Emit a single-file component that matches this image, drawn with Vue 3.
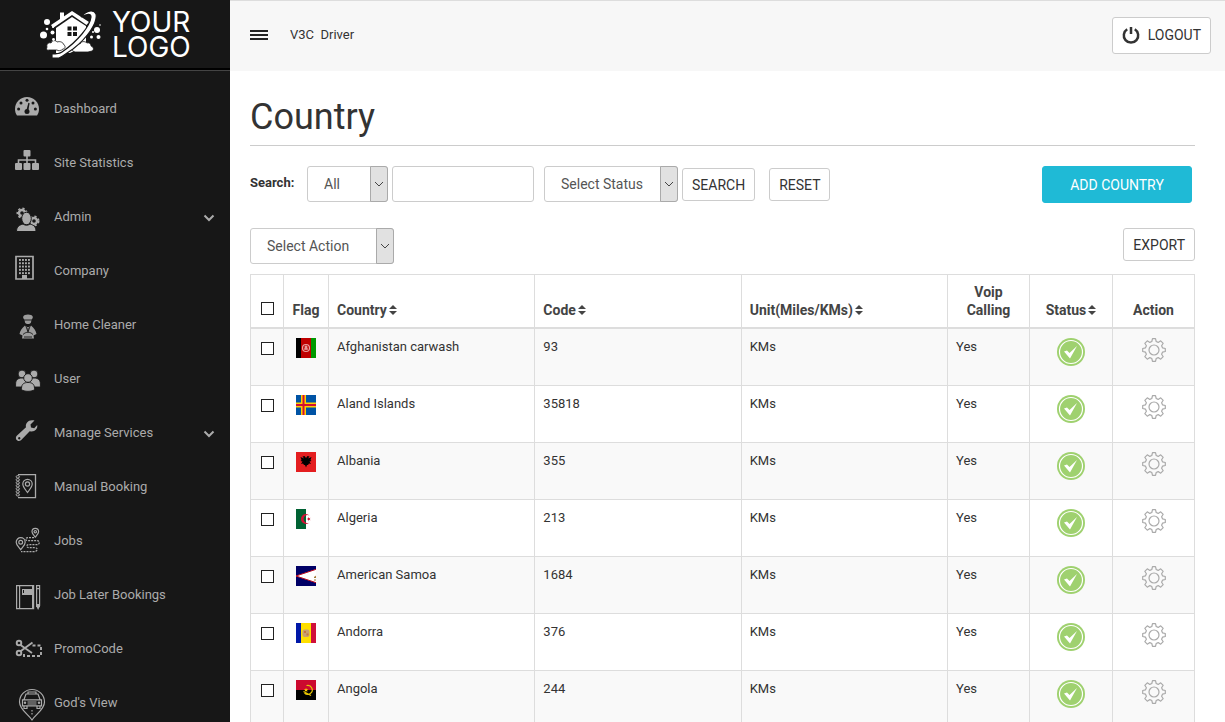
<script setup>
import { ref } from 'vue'

const gear = (cx, cy, r) =>
  `<circle cx="${cx}" cy="${cy}" r="${r}" fill="none" stroke="currentColor" stroke-width="2.4"/><circle cx="${cx}" cy="${cy}" r="${r + 1.7}" fill="none" stroke="currentColor" stroke-width="1.6" stroke-dasharray="2.2 2.2"/>`

const windows = [4, 7, 10, 13]
  .flatMap((x) => [4, 7.3, 10.6, 13.9, 17.2].map((y) => `<rect x="${x}" y="${y}" width="1.9" height="1.9" fill="currentColor"/>`))
  .join('')

const spiral = [5, 8, 11, 14, 17, 20, 23]
  .map((y) => `<ellipse cx="2.8" cy="${y + 0.8}" rx="1.7" ry="1.2" fill="none" stroke="currentColor"/>`)
  .join('')

const menu = [
  {
    label: 'Dashboard',
    icon: `<path fill="currentColor" d="M2 22.5C.6 20.500 0 18.400 0 16 0 9.400 5.400 4 12 4s12 5.400 12 12c0 2.400-.6 4.500-2 6.500z"/><g fill="#171717"><circle cx="3.600" cy="16" r="1.500"/><circle cx="6" cy="10" r="1.500"/><circle cx="12" cy="7.300" r="1.500"/><circle cx="18" cy="10" r="1.500"/><circle cx="20.400" cy="16" r="1.500"/><circle cx="12" cy="18.500" r="2.500"/><path d="M13.400 9.800l1.200.4-1.400 8.400-2-.6z"/></g>`
  },
  {
    label: 'Site Statistics',
    icon: `<g fill="currentColor"><rect x="8.500" y="3" width="7" height="6.500" rx="1"/><rect x="0" y="16" width="7" height="7" rx="1"/><rect x="8.500" y="16" width="7" height="7" rx="1"/><rect x="17" y="16" width="7" height="7" rx="1"/></g><path d="M12 9v8M3.500 17v-4h17v4" fill="none" stroke="currentColor" stroke-width="1.600"/>`
  },
  {
    label: 'Admin',
    open: true,
    icon: `${gear(7, 12, 3)}${gear(19, 20, 3)}<g fill="currentColor" stroke="#171717"><ellipse cx="11.500" cy="17.500" rx="4.800" ry="6.300"/><path d="M1.500 30.500c0-5 3-6.500 6.500-7.500 2 1.600 5 1.600 7 0 3.500 1 6 2.500 6 7.500z"/></g>`
  },
  {
    label: 'Company',
    icon: `<path d="M1 1.500h17v22.500h-17z" fill="none" stroke="currentColor" stroke-width="1.700"/>${windows}<rect x="7" y="20" width="5" height="4" fill="currentColor"/>`
  },
  {
    label: 'Home Cleaner',
    icon: `<g fill="currentColor" opacity=".9"><path d="M9.500 10.500C7 8.500 8 5.500 13 5.500s6 3 3.500 5l-.5 3c-1.300 2-4.700 2-6 0z"/><path d="M10 16.500l3 2 3-2C19 19 21 22 21.500 25l-3 1.500.5 3H7l.5-3-3-1.500c.5-3 2.500-6 5.500-8.500z"/></g><path d="M9.500 11h7M10.500 16l2.500 7 2.500-7M8 25.500c3-3 7-3 10 0M9 28h8M13 19v3" fill="none" stroke="#171717" stroke-width=".9"/>`
  },
  {
    label: 'User',
    icon: `<g fill="currentColor" stroke="#171717" stroke-width=".9"><circle cx="7" cy="11" r="3.900"/><circle cx="19" cy="11" r="3.900"/><path d="M.6 24v-3c0-4 2.400-6 6.400-6s6 2 6 6v3zM13 24v-3c0-4 2-6 6-6s6.400 2 6.400 6v3z"/><circle cx="13" cy="15" r="4.300"/><path d="M6.500 26.500v-1c0-4.500 2.500-6 6.500-6s6.500 1.500 6.500 6v1c-2 2.400-11 2.400-13 0z"/></g>`
  },
  {
    label: 'Manage Services',
    open: true,
    icon: `<path fill="currentColor" fill-rule="evenodd" d="M19.500 3.600l-4 3.800.5 3.200 3.200.6 3-3.200c.7 3.600-2 6.700-6 6.500l-1.500-.3L6 23.300c-2.800 2.400-6.600-1-4.500-4.200L11 10.300C10 6 14 2 19.500 3.600zM4.200 20a1.200 1.200 0 1 0 .1 0z"/>`
  },
  {
    label: 'Manual Booking',
    icon: `<path d="M3 3.700h17.500v23H3" fill="none" stroke="currentColor" stroke-width="1.300"/>${spiral}<path d="M12.500 21.500C10 18 7.800 15.800 7.800 13a4.700 4.700 0 0 1 9.400 0c0 2.800-2.200 5-4.700 8.500z" fill="none" stroke="currentColor" stroke-width="1.200"/><circle cx="12.500" cy="13" r="2.100" fill="none" stroke="currentColor" stroke-width="1.200"/>`
  },
  {
    label: 'Jobs',
    icon: `<g fill="none" stroke="currentColor" stroke-width="1.200"><path d="M5.700 24.700C3 21 1.200 19.700 1.200 17.200a4.500 4.500 0 0 1 9 0c0 2.500-1.800 3.800-4.500 7.500z"/><circle cx="5.700" cy="17.200" r="1.900"/><path d="M20.300 12C18.200 9.500 17 8.500 17 6.700a3.300 3.300 0 0 1 6.600 0c0 1.800-1.200 2.800-3.300 5.300z"/><circle cx="20.300" cy="6.700" r="1.200"/><path stroke-dasharray="2 1" d="M19 12.600h-6c-3 0-3 3 0 3h9c3 0 3 4 0 4h-8c-3 0-3 3 0 3h6c3 0 3 4-1 4H6"/></g>`
  },
  {
    label: 'Job Later Bookings',
    icon: `<g fill="none" stroke="currentColor" stroke-width="1.200"><path d="M1.600 6.600h17v23h-17zM4.600 6.600v23M17.600 6.600v23M21.600 6.600h3v20l-1.500 3-1.500-3zM21.600 9.600h3M21.600 25.600h3"/></g><rect x="7" y="10" width="10" height="6" fill="currentColor"/><rect x="8" y="11" width="1" height="3" fill="#171717"/><rect x="21" y="25" width="4" height="3" fill="currentColor"/>`
  },
  {
    label: 'PromoCode',
    icon: `<g fill="none" stroke="currentColor" stroke-width="1.900"><circle cx="4" cy="10" r="2.300"/><circle cx="4" cy="20" r="2.300"/><path d="M5.500 12L17 20M5.500 18.300L17.500 9.500"/><path stroke-dasharray="3 2" d="M17.500 12.500H26v10.500H9v-4"/></g>`
  },
  {
    label: "God's View",
    icon: `<g fill="none" stroke="currentColor" stroke-width="1.200"><path d="M17 33C13 27 4.500 22.500 4.500 15a12.500 12.500 0 0 1 25 0c0 7.500-8.500 12-12.500 18z"/><path d="M9 12.500l2-5.500h12l2 5.500M13 7V5h8v2M7.500 12.800h19v6h-19zM9 19v2.500h3V19M22 19v2.500h3V19M12.500 17h9M12.500 15h9"/><path stroke-dasharray="1.500 1.500" d="M17 23v6"/></g><circle cx="10" cy="15.800" r="1.200" fill="currentColor"/><circle cx="24" cy="15.800" r="1.200" fill="currentColor"/>`
  }
]

const countries = [
  { name: 'Afghanistan carwash', code: '93', flag: `<path d="M0 0h5v20H0z"/><path fill="#bf0000" d="M5 0h10v20H5z"/><path fill="#090" d="M15 0h5v20h-5z"/><circle cx="10" cy="10" r="3.500" fill="none" stroke="#e9a0a0" stroke-width="1.200"/><path d="M8 11h4M10 7.500v4M8.500 9h3" stroke="#f3caca"/>` },
  { name: 'Aland Islands', code: '35818', flag: `<path fill="#0053a5" d="M0 0h20v20H0z"/><path fill="#ffce00" d="M5 0h5v20H5zM0 7.500h20v5H0z"/><path fill="#d21034" d="M6.500 0h2v20h-2zM0 9h20v2H0z"/>` },
  { name: 'Albania', code: '355', flag: `<path fill="#e41e20" d="M0 0h20v20H0z"/><path d="M10 6L8.500 4 6.500 4.500 8 6.500 4.500 5l1 3-1 1 2 .5-1.500 2.500 2-.5 1 1.500 1 0 1 2.500 1-2.500h1l1-1.500 2 .5-1.500-2.500 2-.5-1-1 1-3L12 6.500l1.500-2-2-.5z"/>` },
  { name: 'Algeria', code: '213', flag: `<path fill="#fff" d="M0 0h20v20H0z"/><path fill="#006233" d="M0 0h10v20H0z"/><path fill="#d21034" d="M13.500 6.500a5 5 0 1 0 0 7 4 4 0 1 1 0-7z"/><path fill="#d21034" d="M10.500 10l1.500-.6V8l1 1.200 1.500-.5-.9 1.300.9 1.300-1.500-.5-1 1.200v-1.500z"/>` },
  { name: 'American Samoa', code: '1684', flag: `<path fill="#006" d="M0 0h20v20H0z"/><path fill="#fff" stroke="#bd1021" d="M21 3L0 10l21 7z"/><path d="M20 10l-2 1.500h2M18 14h2" stroke="#a37a38" fill="none"/>` },
  { name: 'Andorra', code: '376', flag: `<path fill="#0018a8" d="M0 0h6v20H0z"/><path fill="#fedf00" d="M5 0h10v20H5z"/><path fill="#d0103a" d="M15 0h5v20h-5z"/><rect x="6.500" y="6.500" width="7" height="7.500" rx="2" fill="#c8a070"/><path d="M8 8h2v2H8zM10.500 10.500h2v2h-2z" fill="#c7743f"/>` },
  { name: 'Angola', code: '244', flag: `<path d="M0 0h20v20H0z"/><path fill="#cc092f" d="M0 0h20v10H0z"/><g fill="none" stroke="#e6c500" stroke-width="1.200"><path d="M10.500 5.500a4.500 4.500 0 1 1-2 7.500M7.500 11.500l7.500 4"/></g><path fill="#ffcb00" d="M10 8l.7 1.200 1.400.1-1 1 .3 1.400L10 11l-1.300.7.3-1.400-1-1 1.400-.1z"/>` }
]

const field = ref('')
const keyword = ref('')
const status = ref('')
const action = ref('')
</script>

<template>
  <div class="shell">
    <aside class="sidebar">
      <a class="logo" href="#">
        <svg width="62" height="48" viewBox="0 0 62 48" aria-hidden="true">
          <g fill="#fff">
            <path d="M11 15L32 1l17 11-2.500 3L32 5 13 18z" />
            <path d="M20 2.500h4v5l-4 2.500z" />
            <path d="M16 18L32 7l14 9v19L30 43H16z" />
            <path d="M7 37c-1-3 2-5 4-4 1-3 5-3 6-1 3-1 6 0 7 3 2 1 1 4-1 4-2 2-5 2-6 1H9c-2 1-3-1-2-3z" stroke="#171717" stroke-width=".8" />
            <path d="M33 37c2-3 5-4 7-3 1-3 5-3 7-1 3-1 4 2 4 3 3 1 3 4 1 5l-4 1H35c-3-1-4-3-2-5z" stroke="#171717" stroke-width=".8" />
            <path d="M41 7C47 0 54-1 56 4c2 9-9 24-23 35-6 4-11 8-14 9h-7v-4c5 0 7 0 10-2C38 31 50 16 51 7c0-4-4-3-10 0z" stroke="#171717" stroke-width="1.200" />
            <circle cx="7" cy="12" r="3" /><circle cx="3.500" cy="25" r="3.500" /><circle cx="12.500" cy="22.500" r="2" />
            <circle cx="7" cy="19" r="1.300" /><circle cx="13.500" cy="29.500" r="1.400" /><circle cx="13" cy="17" r="1" />
            <circle cx="57" cy="20" r="3" /><circle cx="58.500" cy="27" r="2" /><circle cx="51.500" cy="27" r="1.500" />
            <circle cx="60" cy="15" r=".8" /><circle cx="53" cy="22" r="1" />
          </g>
          <path d="M27.500 16.500h4v4h-4zM33 16.500h4v4h-4zM27.500 22h4v4h-4zM33 22h4v4h-4z" fill="#171717" />
        </svg>
        <span class="logo-text">YOUR<br />LOGO</span>
      </a>
      <nav class="menu">
        <a v-for="item in menu" :key="item.label" class="menu-item" href="#">
          <svg class="menu-icon" width="28" height="30" viewBox="0 0 28 30" v-html="item.icon"></svg>
          <span class="menu-label">{{ item.label }}</span>
          <svg v-if="item.open" class="menu-chevron" width="12" height="8" viewBox="0 0 12 8">
            <path d="M1.500 1.500L6 6l4.500-4.500" fill="none" stroke="currentColor" stroke-width="2" />
          </svg>
        </a>
      </nav>
    </aside>

    <div class="page">
      <header class="topbar">
        <button class="burger" type="button" aria-label="Toggle menu">
          <svg width="18" height="10" viewBox="0 0 18 10"><path d="M0 0h18v2H0zM0 4h18v2H0zM0 8h18v2H0z" fill="#222" /></svg>
        </button>
        <span class="user-name">V3C&nbsp; Driver</span>
        <button class="btn logout" type="button">
          <svg width="18" height="18" viewBox="0 0 18 18">
            <path d="M5.200 3.300a7.200 7.200 0 1 0 7.600 0M9 1v7" fill="none" stroke="#333" stroke-width="2.500" />
          </svg>
          LOGOUT
        </button>
      </header>

      <main class="content">
        <h1 class="title">Country</h1>

        <form class="filters" @submit.prevent>
          <label class="filters-label" for="keyword">Search:</label>
          <span class="select field-select">
            <select v-model="field" aria-label="Search field">
              <option value="">All</option>
              <option>Country</option>
              <option>Code</option>
            </select>
            <span class="select-arrow"><svg width="10" height="6" viewBox="0 0 10 6"><path d="M1 1l4 4 4-4" fill="none" stroke="#444" /></svg></span>
          </span>
          <input id="keyword" v-model="keyword" class="keyword" type="text" />
          <span class="select status-select">
            <select v-model="status" aria-label="Status">
              <option value="">Select Status</option>
              <option>Active</option>
              <option>Inactive</option>
            </select>
            <span class="select-arrow"><svg width="10" height="6" viewBox="0 0 10 6"><path d="M1 1l4 4 4-4" fill="none" stroke="#444" /></svg></span>
          </span>
          <div class="filters-buttons">
            <button class="btn" type="submit">SEARCH</button>
            <button class="btn" type="reset">RESET</button>
          </div>
          <button class="btn add" type="button">ADD COUNTRY</button>
        </form>

        <div class="actions">
          <span class="select action-select">
            <select v-model="action" aria-label="Bulk action">
              <option value="">Select Action</option>
              <option>Delete</option>
            </select>
            <span class="select-arrow"><svg width="10" height="6" viewBox="0 0 10 6"><path d="M1 1l4 4 4-4" fill="none" stroke="#444" /></svg></span>
          </span>
          <button class="btn" type="button">EXPORT</button>
        </div>

        <table class="grid">
          <colgroup>
            <col class="c-check" /><col class="c-flag" /><col /><col /><col />
            <col class="c-small" /><col class="c-status" /><col class="c-small" />
          </colgroup>
          <thead>
            <tr>
              <th class="center"><input type="checkbox" aria-label="Select all" /></th>
              <th class="center">Flag</th>
              <th>Country<svg class="sort" width="8" height="10" viewBox="0 0 8 10"><path d="M0 4l4-4 4 4zM0 6h8l-4 4z" fill="#444" /></svg></th>
              <th>Code<svg class="sort" width="8" height="10" viewBox="0 0 8 10"><path d="M0 4l4-4 4 4zM0 6h8l-4 4z" fill="#444" /></svg></th>
              <th>Unit(Miles/KMs)<svg class="sort" width="8" height="10" viewBox="0 0 8 10"><path d="M0 4l4-4 4 4zM0 6h8l-4 4z" fill="#444" /></svg></th>
              <th class="center voip">Voip Calling</th>
              <th class="center">Status<svg class="sort" width="8" height="10" viewBox="0 0 8 10"><path d="M0 4l4-4 4 4zM0 6h8l-4 4z" fill="#444" /></svg></th>
              <th class="center">Action</th>
            </tr>
          </thead>
          <tbody>
            <tr v-for="country in countries" :key="country.code">
              <td class="center"><input type="checkbox" :aria-label="'Select ' + country.name" /></td>
              <td class="center"><svg class="flag" width="20" height="20" viewBox="0 0 20 20" v-html="country.flag"></svg></td>
              <td>{{ country.name }}</td>
              <td>{{ country.code }}</td>
              <td>KMs</td>
              <td>Yes</td>
              <td class="center">
                <svg class="mark" width="28" height="28" viewBox="0 0 28 28">
                  <circle cx="14" cy="14" r="14" fill="#9fd16f" />
                  <circle cx="14" cy="14" r="11.500" fill="none" stroke="#fff" stroke-width="1.200" />
                  <path d="M7 13.500l3-1 2.500 2.500 7.500-7-7 12.500z" fill="#fff" />
                </svg>
              </td>
              <td class="center">
                <button class="gear" type="button" :aria-label="'Actions for ' + country.name">
                  <svg width="24" height="24" viewBox="0 0 24 24" fill="none" stroke="#aaa" stroke-width="1.200" stroke-linejoin="round">
                    <path d="M10.500.700h3l.700 2.800 2 .900 2.500-1.600 2.500 2.500-1.600 2.500.900 2 2.800.700v3l-2.800.700-.900 2 1.600 2.500-2.500 2.500-2.500-1.600-2 .900-.700 2.800h-3l-.700-2.800-2-.900-2.500 1.600-2.500-2.500 1.600-2.500-.900-2-2.800-.700v-3l2.800-.700.900-2-1.600-2.500 2.500-2.500 2.500 1.600 2-.900z" />
                    <circle cx="12" cy="12" r="5" />
                  </svg>
                </button>
              </td>
            </tr>
          </tbody>
        </table>
      </main>
    </div>
  </div>
</template>

<style>
body {
  margin: 0;
  overflow: hidden;
  background: #fff;
}
</style>

<style scoped>
.shell {
  display: flex;
  height: 100vh;
  overflow: hidden;
  color: #333;
  font: 14px/18px Roboto, "Open Sans", sans-serif;
}

.shell * {
  box-sizing: border-box;
}

.sidebar {
  flex: 0 0 230px;
  overflow: hidden;
  background: #171717;
  color: #ababab;
}

.logo {
  display: flex;
  gap: 10px;
  height: 70px;
  padding: 10px 0 0 40px;
  border-bottom: 2px solid #000;
  color: #fff;
  text-decoration: none;
}

.logo-text {
  font: 28px/25px Inter, sans-serif;
}

.menu {
  display: flex;
  flex-direction: column;
  padding-top: 10px;
  border-top: 1px solid #444;
}

.menu-item {
  display: flex;
  flex: none;
  align-items: center;
  height: 54px;
  padding: 0 15px;
  color: inherit;
  font-size: 13px;
  text-decoration: none;
}

.menu-icon {
  flex: none;
  margin-right: 11px;
  overflow: visible;
}

.menu-label {
  flex: 1;
  padding-top: 2px;
}

.menu-chevron {
  margin-top: 4px;
}

.page {
  flex: 1;
  min-width: 0;
}

.topbar {
  display: flex;
  align-items: center;
  height: 71px;
  padding: 0 14px 2px 20px;
  border-top: 1px solid #ddd;
  background: #f7f7f7;
}

.burger,
.gear {
  display: inline-flex;
  padding: 0;
  border: 0;
  background: none;
}

.user-name {
  flex: 1;
  padding-left: 22px;
  font-size: 13px;
}

.btn {
  display: inline-flex;
  align-items: center;
  justify-content: center;
  height: 33px;
  padding: 0 9px;
  border: 1px solid #ccc;
  border-radius: 3px;
  background: #fff;
  color: #333;
  font: 14px/18px Roboto, "Open Sans", sans-serif;
}

.logout {
  gap: 8px;
  height: 37px;
}

.content {
  padding: 26px 30px 0 20px;
}

.title {
  margin: 0;
  padding-bottom: 8px;
  border-bottom: 1px solid #ccc;
  font-size: 36px;
  font-weight: 400;
  line-height: 40px;
}

.filters {
  display: flex;
  align-items: flex-start;
  padding: 20px 3px 0 0;
}

.filters-label {
  width: 57px;
  padding-top: 8px;
  font-size: 13px;
  font-weight: 700;
}

.filters-buttons {
  display: flex;
  gap: 14px;
  padding: 2px 0 0 4px;
}

.select {
  position: relative;
  display: inline-flex;
  height: 36px;
}

.select select {
  width: 100%;
  padding: 0 24px 0 16px;
  border: 1px solid #ccc;
  border-radius: 3px;
  background: #fff;
  color: #555;
  font: inherit;
  appearance: none;
}

.select-arrow {
  position: absolute;
  top: 0;
  right: 0;
  bottom: 0;
  display: flex;
  align-items: center;
  justify-content: center;
  width: 18px;
  border: 1px solid #aaa;
  border-radius: 0 3px 3px 0;
  background: #e1e1e1;
  pointer-events: none;
}

.field-select {
  width: 81px;
}

.keyword {
  width: 142px;
  height: 36px;
  margin: 0 10px 0 4px;
  padding: 0 12px;
  border: 1px solid #ccc;
  border-radius: 3px;
  font: inherit;
}

.status-select {
  width: 134px;
}

.add {
  width: 150px;
  height: 37px;
  margin-left: auto;
  border-color: #1fbad6;
  background: #1fbad6;
  color: #fff;
}

.actions {
  display: flex;
  align-items: flex-start;
  justify-content: space-between;
  padding: 25px 0 10px;
}

.action-select {
  width: 144px;
}

.grid {
  width: 100%;
  border-collapse: collapse;
  table-layout: fixed;
}

.c-check {
  width: 33px;
}

.c-flag {
  width: 45px;
}

.c-small {
  width: 82px;
}

.c-status {
  width: 83px;
}

.grid th,
.grid td {
  padding: 8px;
  border: 1px solid #ddd;
  text-align: left;
  vertical-align: top;
}

.grid th {
  border-bottom-width: 2px;
  color: #444;
  font-weight: 700;
  vertical-align: bottom;
}

.grid td {
  height: 57px;
  padding-top: 9px;
  font-size: 13px;
}

.grid .center {
  padding-right: 0;
  padding-left: 0;
  text-align: center;
}

.grid .voip {
  padding-right: 8px;
  padding-left: 8px;
}

.grid tbody tr:nth-child(odd) {
  background: #f9f9f9;
}

.grid input {
  width: 13px;
  height: 13px;
  margin: 4px 0 0;
  border: 1px solid #222;
  background: #fff;
  appearance: none;
  vertical-align: top;
}

.grid th input {
  margin-bottom: 4px;
}

.grid input:checked {
  background: #1fbad6;
}

.sort {
  margin-left: 2px;
}

.flag,
.mark {
  display: block;
  margin: 0 auto;
}
</style>
